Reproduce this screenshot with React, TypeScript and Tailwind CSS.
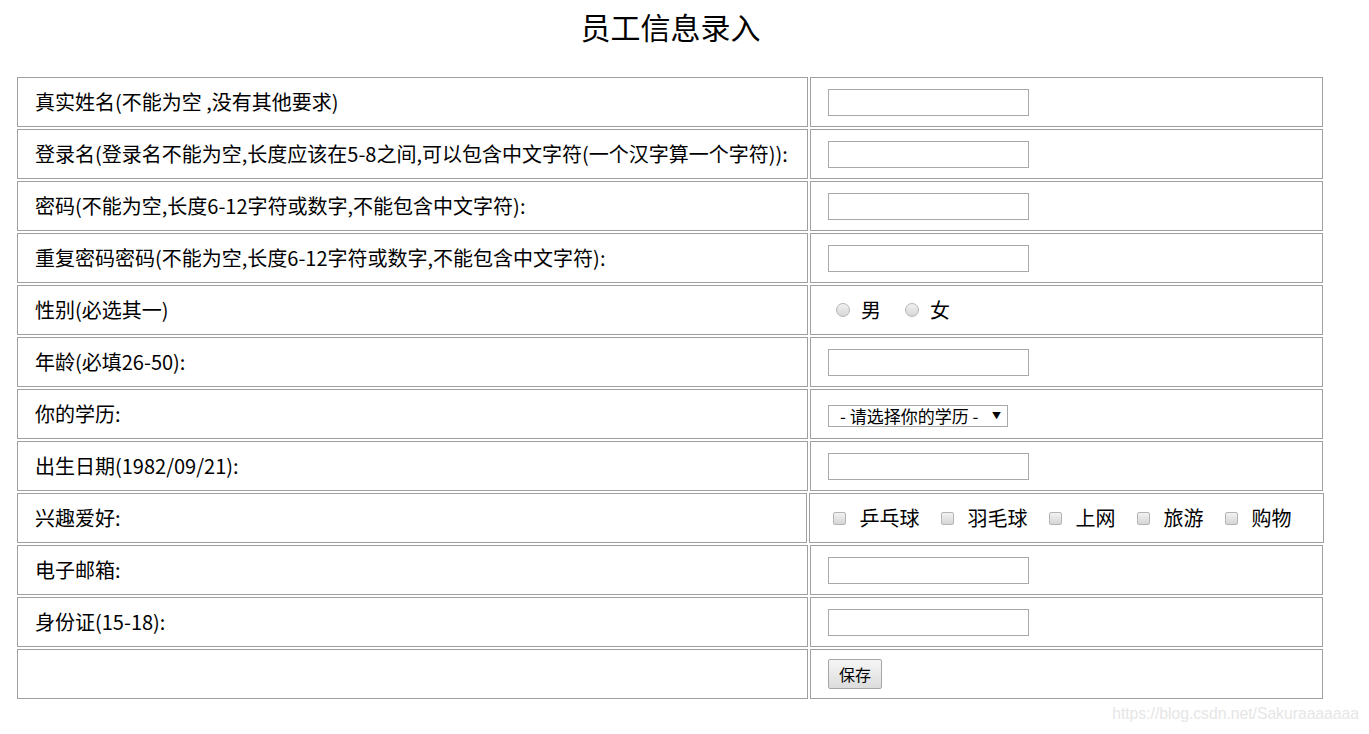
import React from "react";

const font = { fontFamily: '"Noto Sans CJK SC", "Noto Sans", sans-serif' };

function TextBox() {
	return <input type="text" className="w-[201px] h-[27px] border border-[#a9a9a9] bg-white outline-none" />;
}

function Radio({ label }: { label: string }) {
	return (
		<label className="flex items-center mr-[24px]">
			<span className="w-[14px] h-[14px] rounded-full border border-[#b5b5b5] bg-gradient-to-b from-[#f2f2f2] to-[#d6d6d6] mr-[11px]" />
			<span>{label}</span>
		</label>
	);
}

function Check({ label }: { label: string }) {
	return (
		<label className="flex items-center mr-[22px]">
			<span className="w-[13px] h-[13px] rounded-[2px] border border-[#b5b5b5] bg-gradient-to-b from-[#f2f2f2] to-[#d6d6d6] mr-[13px]" />
			<span>{label}</span>
		</label>
	);
}

function Row({ label, children, wide }: { label: string; children?: React.ReactNode; wide?: boolean }) {
	return (
		<div className="flex gap-[2px]">
			<div className="w-[791px] h-[50px] border border-[#a0a0a0] flex items-center pl-[17px] text-[20px] text-black whitespace-nowrap">
				{label}
			</div>
			<div
				className={
					(wide ? "w-[515px] " : "w-[513px] ") +
					"h-[50px] border border-[#a0a0a0] flex items-center pl-[17px] text-[20px] text-black"
				}
			>
				{children}
			</div>
		</div>
	);
}

export default function App() {
	return (
		<div className="bg-white w-[1369px] h-[734px] relative" style={font}>
			<div className="pl-[17px] w-[1324px]">
				<h2 className="text-center text-[30px] leading-none pt-[11px] pb-[36px] text-black">员工信息录入</h2>
				<div className="flex flex-col gap-[2px]">
					<Row label="真实姓名(不能为空 ,没有其他要求)">
						<TextBox />
					</Row>
					<Row label="登录名(登录名不能为空,长度应该在5-8之间,可以包含中文字符(一个汉字算一个字符)):">
						<TextBox />
					</Row>
					<Row label="密码(不能为空,长度6-12字符或数字,不能包含中文字符):">
						<TextBox />
					</Row>
					<Row label="重复密码密码(不能为空,长度6-12字符或数字,不能包含中文字符):">
						<TextBox />
					</Row>
					<Row label="性别(必选其一)">
						<div className="flex items-center pl-[8px]">
							<Radio label="男" />
							<Radio label="女" />
						</div>
					</Row>
					<Row label="年龄(必填26-50):">
						<TextBox />
					</Row>
					<Row label="你的学历:">
						<div className="w-[180px] h-[22px] border border-[#a9a9a9] flex items-center justify-between pl-[11px] pr-[6px] text-[17px] leading-none mt-[3px]">
							<span>- 请选择你的学历 -</span>
							<span className="text-[9px]">▼</span>
						</div>
					</Row>
					<Row label="出生日期(1982/09/21):">
						<TextBox />
					</Row>
					<Row label="兴趣爱好:" wide>
						<div className="flex items-center pl-[6px]">
							<Check label="乒乓球" />
							<Check label="羽毛球" />
							<Check label="上网" />
							<Check label="旅游" />
							<Check label="购物" />
						</div>
					</Row>
					<Row label="电子邮箱:">
						<TextBox />
					</Row>
					<Row label="身份证(15-18):">
						<TextBox />
					</Row>
					<Row label="">
						<button className="w-[54px] h-[30px] border border-[#a6a6a6] rounded-[2px] bg-gradient-to-b from-[#f6f6f6] to-[#dcdcdc] text-[16px] text-black">
							保存
						</button>
					</Row>
				</div>
			</div>
			<div
				className="absolute right-[10px] bottom-[8px] text-[15.7px] text-[#e6e6e6]"
				style={{ fontFamily: '"Liberation Sans", Arial, sans-serif' }}
			>
				https://blog.csdn.net/Sakuraaaaaaa
			</div>
		</div>
	);
}
